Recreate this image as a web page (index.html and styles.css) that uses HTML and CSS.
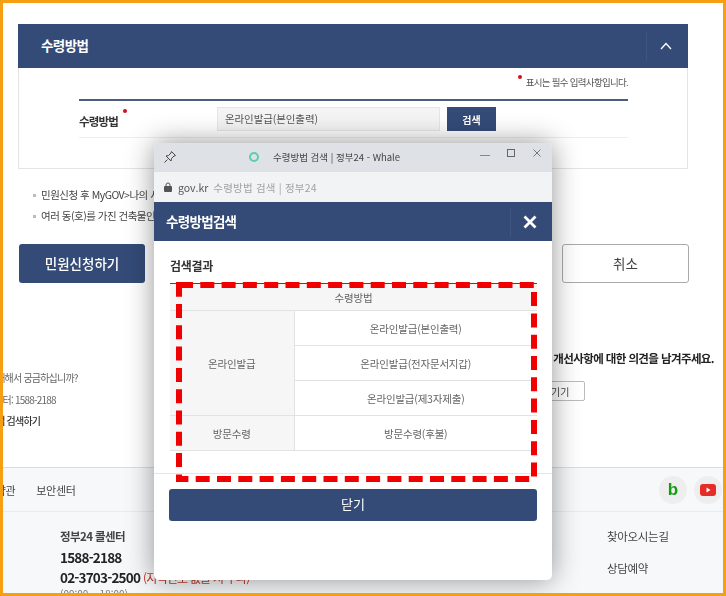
FILE: index.html
```html
<!DOCTYPE html>
<html lang="ko">
<head>
  <meta charset="utf-8" />
  <title>수령방법</title>
  <link rel="stylesheet" href="styles.css">
</head>
<body>

  <div class="shot">
    <section class="card">
      <div class="card-head">
        <h2>수령방법</h2>
        <div class="card-toggle">
          <svg width="12" height="8" viewBox="0 0 12 8"><path d="M1 7l5-5.500L11 7" fill="none" stroke="#fff" stroke-width="1.300"/></svg>
        </div>
      </div>
      <div class="card-body">
        <p class="req-note"><span class="req-dot"></span>표시는 필수 입력사항입니다.</p>
        <div class="form-row">
          <label class="form-label">수령방법<span class="req-dot req-dot-label"></span></label>
          <div class="form-input">온라인발급(본인출력)</div>
          <button class="btn-search">검색</button>
        </div>
      </div>
    </section>

    <ul class="notice">
      <li>민원신청 후 MyGOV&gt;나의 서비스에서 확인하실 수 있습니다.</li>
      <li>여러 동(호)를 가진 건축물인 경우 해당 동(호)를 선택하십시오.</li>
    </ul>

    <div class="actions">
      <button class="btn-primary">민원신청하기</button>
      <button class="btn-cancel">취소</button>
    </div>

    <div class="help">
      <div class="help-left">
        <p>민원에 대해서 궁금하십니까?</p>
        <p>민원콜센터: 1588-2188</p>
        <p class="help-strong">궁금한 점 검색하기</p>
      </div>
      <div class="help-right">
        <p class="help-title">정부24 이용 시 개선사항에 대한 의견을 남겨주세요.</p>
        <button class="btn-small">의견 남기기</button>
      </div>
    </div>

    <footer class="footer">
      <div class="footer-top">
        <nav class="footer-nav">
          <span>이용약관</span>
          <span>보안센터</span>
        </nav>
        <div class="footer-sns">
          <span class="sns-icon sns-blog">b</span>
          <span class="sns-icon">
            <svg width="16" height="12" viewBox="0 0 16 12"><rect width="16" height="12" rx="3" fill="#e52d27"/><path d="M6.500 3.500v5l4-2.500z" fill="#fff"/></svg>
          </span>
        </div>
      </div>
      <div class="footer-main">
        <div class="callcenter">
          <p class="call-title">정부24 콜센터</p>
          <p class="call-num">1588-2188</p>
          <p class="call-num">02-3703-2500 <span class="call-red">(지역번호 없을 시 부과)</span></p>
          <p class="call-time">(09:00 ~ 18:00)</p>
        </div>
        <div class="footer-links">
          <span>찾아오시는길</span>
          <span>상담예약</span>
        </div>
      </div>
    </footer>

    <!-- popup window -->
    <div class="popup">
      <div class="popup-title">
        <svg class="pin" width="14" height="14" viewBox="0 0 14 14"><path d="M8.500 1.500l4 4-1.500.5-2.500 2.500-.5 2.500-5-5 2.500-.5L8 3z M4.500 9.500L1.500 12.500" fill="none" stroke="#444" stroke-width="1"/></svg>
        <span class="whale-ring"></span>
        <span class="popup-name">수령방법 검색 | 정부24 - Whale</span>
        <div class="win-btns">
          <svg width="10" height="10" viewBox="0 0 10 10"><path d="M0 7.500h10" stroke="#888" stroke-width="1"/></svg>
          <svg width="10" height="10" viewBox="0 0 10 10"><rect x="1.500" y="1.500" width="7" height="7" fill="none" stroke="#666" stroke-width="1"/></svg>
          <svg width="10" height="10" viewBox="0 0 10 10"><path d="M1.500 1.500l7 7M8.500 1.500l-7 7" stroke="#777" stroke-width="1"/></svg>
        </div>
      </div>
      <div class="popup-addr">
        <svg width="8" height="10" viewBox="0 0 8 10"><path d="M2 4.500V3a2 2 0 0 1 4 0v1.500" fill="none" stroke="#555" stroke-width="1"/><rect y="4" width="8" height="6" rx="1" fill="#555"/></svg>
        <span class="addr-host">gov.kr</span>
        <span class="addr-title">수령방법 검색 | 정부24</span>
      </div>
      <div class="modal-head">
        <h3>수령방법검색</h3>
        <div class="modal-close">
          <svg width="14" height="14" viewBox="0 0 14 14"><path d="M1.500 1.500l11 11M12.500 1.500l-11 11" stroke="#fff" stroke-width="2.800"/></svg>
        </div>
      </div>
      <div class="modal-body">
        <h4>검색결과</h4>
        <table class="result">
          <colgroup>
            <col class="col-group">
            <col>
          </colgroup>
          <thead>
            <tr><th colspan="2">수령방법</th></tr>
          </thead>
          <tbody>
            <tr><th rowspan="3">온라인발급</th><td>온라인발급(본인출력)</td></tr>
            <tr><td>온라인발급(전자문서지갑)</td></tr>
            <tr><td>온라인발급(제3자제출)</td></tr>
            <tr><th>방문수령</th><td>방문수령(후불)</td></tr>
          </tbody>
        </table>
        <div class="modal-foot">
          <button class="btn-close">닫기</button>
        </div>
      </div>
      <svg class="red-box" width="362" height="200" viewBox="0 0 362 200">
        <rect x="3" y="3" width="355" height="194" fill="none" stroke="#f00000" stroke-width="6" stroke-dasharray="14 7.300"/>
      </svg>
    </div>
  </div>

</body>
</html>
```

FILE: styles.css
```css
/* --- General Setup --- */
:root {
  --navy: #344b78;
  --line: #e4e4e4;
  --orange: #f79f12;
  --text: #444;
}
*, *::before, *::after {
  box-sizing: border-box;
}
html, body {
  margin: 0;
}
body {
  font-family: "Noto Sans CJK KR", "Noto Sans", sans-serif;
  color: var(--text);
  background: #fff;
}
p, h2, h3, h4, ul {
  margin: 0;
  padding: 0;
}
button {
  font-family: inherit;
  padding: 0;
}
.shot {
  position: relative;
  width: 726px;
  height: 596px;
  border: 3px solid var(--orange);
  overflow: hidden;
}
/* the source picture is a soft, rescaled capture */
.shot > * {
  filter: blur(0.35px);
}

/* --- Card --- */
.card {
  margin: 21px 0 0 15px;
  width: 670px;
}
.card-head {
  height: 44px;
  background: var(--navy);
  color: #fff;
  display: flex;
  align-items: center;
  justify-content: space-between;
  padding: 0 1px 3px 23px;
}
.card-head h2 {
  font-size: 13.500px;
  font-weight: 700;
  letter-spacing: -0.6px;
}
.card-toggle {
  width: 41px;
  height: 29px;
  margin-top: 3px;
  border-left: 1px solid #40567f;
  display: flex;
  align-items: center;
  justify-content: center;
  padding-right: 3px;
}
.card-body {
  height: 101px;
  border: 1px solid var(--line);
  border-top: 0;
  padding: 0 59px 0 60px;
}
.req-note {
  height: 31px;
  padding-top: 6px;
  text-align: right;
  font-size: 9.500px;
  line-height: 16px;
  letter-spacing: -0.7px;
  color: #555;
}
.req-dot {
  display: inline-block;
  width: 4px;
  height: 4px;
  border-radius: 50%;
  background: #d0101c;
  margin-right: 4px;
  vertical-align: 7px;
}
.form-row {
  height: 39px;
  border-top: 2px solid #4b5d7c;
  border-bottom: 1px solid #eee;
  display: flex;
  align-items: center;
}
.form-label {
  width: 138px;
  font-size: 11.500px;
  font-weight: 700;
  letter-spacing: -0.8px;
  color: #333;
}
.req-dot-label {
  margin: 0 0 0 5px;
  vertical-align: 13px;
}
.form-input {
  width: 223px;
  height: 24px;
  background: #f4f4f4;
  border: 1px solid #e6e6e6;
  font-size: 10.500px;
  line-height: 21px;
  letter-spacing: -0.1px;
  padding-left: 7px;
  color: #555;
}
.btn-search {
  width: 49px;
  height: 24px;
  margin-left: 7px;
  background: var(--navy);
  border: 0;
  color: #fff;
  font-size: 10px;
  font-weight: 700;
}

/* --- Notices and actions --- */
.notice {
  list-style: none;
  margin: 15px 0 0 35px;
  font-size: 10.500px;
  line-height: 21px;
  letter-spacing: -0.5px;
  white-space: nowrap;
}
.notice li::before {
  content: "";
  display: inline-block;
  width: 3px;
  height: 3px;
  background: #bbb;
  margin: 0 5px 2px -5px;
}
.actions {
  margin: 18px 34px 0 16px;
  display: flex;
  justify-content: space-between;
}
.btn-primary {
  width: 126px;
  height: 39px;
  background: var(--navy);
  border: 0;
  border-radius: 3px;
  color: #fff;
  font-size: 13.500px;
  font-weight: 500;
  padding-bottom: 2px;
}
.btn-cancel {
  width: 127px;
  height: 39px;
  background: #fff;
  border: 1px solid #aaa;
  border-radius: 3px;
  color: #444;
  font-size: 13.500px;
  padding-bottom: 2px;
}

/* --- Help block --- */
.help {
  margin-top: 60px;
  height: 124px;
  display: flex;
  justify-content: space-between;
  white-space: nowrap;
}
.help-left {
  margin-left: -34px;
  padding-top: 24px;
  font-size: 10px;
  line-height: 21.500px;
  letter-spacing: -0.8px;
  color: #666;
}
.help-strong {
  color: #333;
  font-weight: 500;
}
.help-right {
  padding: 5px 9px 0 0;
  display: flex;
  flex-direction: column;
  align-items: flex-end;
}
.help-title {
  font-size: 11.500px;
  line-height: 20px;
  font-weight: 700;
  letter-spacing: -0.6px;
  color: #222;
}
.btn-small {
  width: 80px;
  height: 20px;
  margin: 13px 129px 0 0;
  background: #fff;
  border: 1px solid #bbb;
  border-radius: 2px;
  font-size: 10px;
  color: #444;
}

/* --- Footer --- */
.footer {
  height: 130px;
  background: #f7f8fa;
  border-top: 1px solid #ddd;
}
.footer-top {
  height: 44px;
  border-bottom: 1px solid #ebebeb;
  display: flex;
  align-items: center;
  justify-content: space-between;
}
.footer-nav {
  margin-left: -27px;
  display: flex;
  gap: 21px;
  font-size: 11px;
  letter-spacing: -0.3px;
  color: #444;
}
.footer-sns {
  display: flex;
  gap: 7px;
  margin-right: 1px;
}
.sns-icon {
  width: 28px;
  height: 28px;
  border-radius: 50%;
  background: #eee;
  display: flex;
  align-items: center;
  justify-content: center;
}
.sns-blog {
  color: #12a012;
  font-family: "Liberation Sans", sans-serif;
  font-size: 17px;
  font-weight: 700;
}
.footer-main {
  display: flex;
  justify-content: space-between;
  padding: 13px 0 0 57px;
}
.callcenter {
  white-space: nowrap;
}
.call-title {
  font-size: 11.500px;
  line-height: 22px;
  font-weight: 700;
  letter-spacing: -0.6px;
  margin-bottom: 1px;
}
.call-num {
  font-size: 13.500px;
  line-height: 19.500px;
  font-weight: 700;
  letter-spacing: -0.8px;
  color: #222;
}
.call-red {
  font-size: 12px;
  font-weight: 400;
  color: #c0392b;
}
.call-time {
  font-size: 10px;
  line-height: 14px;
  color: #777;
}
.footer-links {
  width: 116px;
  font-size: 11.500px;
  line-height: 22px;
  letter-spacing: -0.3px;
  display: flex;
  flex-direction: column;
  gap: 10px;
}

/* --- Popup window --- */
.popup {
  position: absolute;
  left: 151px;
  top: 140px;
  width: 398px;
  height: 437px;
  background: #fff;
  border-radius: 5px;
  overflow: hidden;
  box-shadow: 0 0 28px rgba(0, 0, 0, 0.42);
  display: flex;
  flex-direction: column;
}
.popup-title {
  height: 29px;
  flex: none;
  background: #dee1e6;
  display: flex;
  align-items: center;
  padding: 0 10px 2px 9px;
  font-size: 9.500px;
  color: #444;
}
.pin {
  margin-right: 72px;
}
.whale-ring {
  width: 10px;
  height: 10px;
  border: 2px solid #5ccdb4;
  border-radius: 50%;
  margin-right: 14px;
}
.popup-name {
  flex: 1;
}
.win-btns {
  display: flex;
  gap: 16px;
  margin-top: -8px;
}
.popup-addr {
  height: 30px;
  flex: none;
  background: #f1f3f4;
  display: flex;
  align-items: center;
  padding-left: 10px;
  font-size: 10.500px;
}
.addr-host {
  margin-left: 6px;
  color: #555;
}
.addr-title {
  margin-left: 5px;
  color: #a3a3a3;
  letter-spacing: 0.2px;
}
.modal-head {
  height: 39px;
  flex: none;
  background: var(--navy);
  color: #fff;
  display: flex;
  align-items: center;
  justify-content: space-between;
  padding: 0 0 2px 12px;
}
.modal-head h3 {
  font-size: 13.500px;
  font-weight: 700;
  letter-spacing: -0.7px;
}
.modal-close {
  width: 42px;
  height: 28px;
  margin-top: 2px;
  border-left: 1px solid #40567f;
  display: flex;
  align-items: center;
  justify-content: center;
  padding-right: 3px;
}
.modal-body {
  flex: 1;
  padding: 0 15px;
}
.modal-body h4 {
  font-size: 12px;
  line-height: 18px;
  font-weight: 700;
  color: #333;
  margin: 16px 0 0 1px;
  letter-spacing: -0.3px;
}
.result {
  width: 367px;
  margin: 8px 0 0 1px;
  border-collapse: collapse;
  table-layout: fixed;
  border-top: 1px solid #3a4a68;
  font-size: 10.500px;
  letter-spacing: -0.2px;
  color: #666;
}
.col-group {
  width: 124px;
}
.result th,
.result td {
  height: 35px;
  padding: 0;
  text-align: center;
  font-weight: 400;
  border-bottom: 1px solid #e2e2e2;
}
.result th {
  background: #f6f6f6;
  border-right: 1px solid #e2e2e2;
}
.result thead th {
  height: 27px;
  border-right: 0;
}
.modal-foot {
  margin: 22px -15px 0;
  padding: 15px 14px 0 15px;
  border-top: 1px solid #e6e6e6;
}
.btn-close {
  width: 368px;
  height: 32px;
  background: var(--navy);
  border: 0;
  border-radius: 3px;
  color: #fff;
  font-size: 13px;
  padding-bottom: 3px;
}
.red-box {
  position: absolute;
  left: 22px;
  top: 139px;
}
```
